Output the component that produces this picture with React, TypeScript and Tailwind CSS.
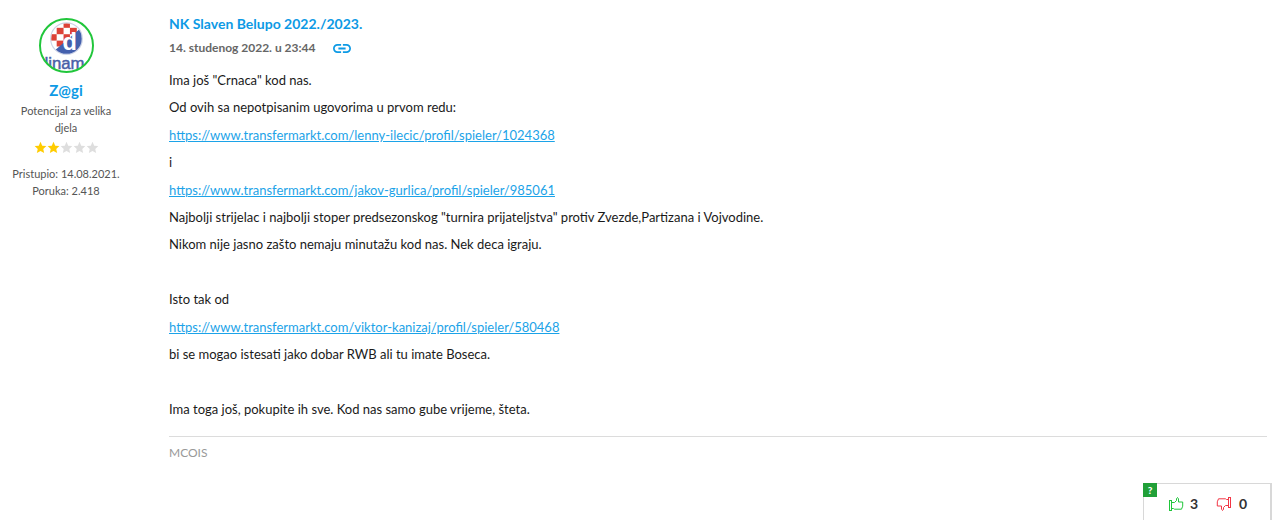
import { useState } from 'react'

const user = {
  name: 'Z@gi',
  rank: 'Potencijal za velika djela',
  joined: '14.08.2021.',
  posts: '2.418',
  stars: 2,
}

const lines = [
  { text: 'Ima još "Crnaca" kod nas.' },
  { text: 'Od ovih sa nepotpisanim ugovorima u prvom redu:' },
  { href: 'https://www.transfermarkt.com/lenny-ilecic/profil/spieler/1024368' },
  { text: 'i' },
  { href: 'https://www.transfermarkt.com/jakov-gurlica/profil/spieler/985061' },
  { text: 'Najbolji strijelac i najbolji stoper predsezonskog "turnira prijateljstva" protiv Zvezde,Partizana i Vojvodine.' },
  { text: 'Nikom nije jasno zašto nemaju minutažu kod nas. Nek deca igraju.' },
  {},
  { text: 'Isto tak od' },
  { href: 'https://www.transfermarkt.com/viktor-kanizaj/profil/spieler/580468' },
  { text: 'bi se mogao istesati jako dobar RWB ali tu imate Boseca.' },
  {},
  { text: 'Ima toga još, pokupite ih sve. Kod nas samo gube vrijeme, šteta.' },
]

function Avatar() {
  return (
    <svg viewBox="0 0 56 56" className="size-[55px]" role="img" aria-label="Dinamo">
      <defs>
        <clipPath id="frame">
          <circle cx="28" cy="28" r="26.5" />
        </clipPath>
        <clipPath id="crest">
          <circle cx="28" cy="21" r="15.5" />
        </clipPath>
      </defs>
      <g clipPath="url(#frame)">
        <rect width="56" height="56" fill="#fff" />
        <circle cx="28" cy="21" r="16.7" fill="#cdd3e6" />
        <g clipPath="url(#crest)">
          <rect x="10" y="2" width="36" height="37" fill="#fff" />
          <g fill="#dc4238">
            <rect x="25" y="4" width="6.500" height="6" />
            <rect x="18" y="10" width="7" height="6.500" />
            <rect x="31.500" y="10" width="7" height="6.500" />
            <rect x="12" y="16.500" width="6" height="6.500" />
            <rect x="25" y="16.500" width="6.500" height="6.500" />
            <rect x="18" y="23" width="7" height="6" />
          </g>
          <path d="M44 9 16 33v7h30V9z" fill="#4460ad" />
        </g>
        <text x="24" y="33" fontSize="24" fontWeight="700" fill="#fff" className="font-['Liberation_Sans',sans-serif]">
          d
        </text>
        <text x="0" y="52" fontSize="17" fill="#4a5fa8" stroke="#4a5fa8" strokeWidth=".5" className="font-['Liberation_Sans',sans-serif]">
          dinam
        </text>
      </g>
      <circle cx="28" cy="28" r="27" fill="none" stroke="#21c63b" strokeWidth="2" />
    </svg>
  )
}

function Star({ filled }: { filled: boolean }) {
  return (
    <svg viewBox="0 0 24 24" className={filled ? 'size-[13px] text-[#ffcc00]' : 'size-[13px] text-[#dedede]'} fill="currentColor">
      <path d="M12 1.5l3.2 7.1 7.6.8-5.7 5.2 1.6 7.6-6.7-3.9-6.7 3.9 1.6-7.6L1.2 9.4l7.6-.8z" />
    </svg>
  )
}

function LinkIcon() {
  return (
    <svg viewBox="2 7 20 10" className="h-[9px] w-[18px]" fill="currentColor">
      <path d="M3.9 12c0-1.71 1.39-3.1 3.1-3.1h4V7H7c-2.76 0-5 2.24-5 5s2.24 5 5 5h4v-1.9H7c-1.71 0-3.1-1.39-3.1-3.1zM8 13h8v-2H8v2zm9-6h-4v1.9h4c1.71 0 3.1 1.39 3.1 3.1s-1.39 3.1-3.1 3.1h-4V17h4c2.76 0 5-2.24 5-5s-2.24-5-5-5z" />
    </svg>
  )
}

function Thumb({ className }: { className: string }) {
  return (
    <svg viewBox="0 0 16 16" className={className} fill="none" stroke="currentColor">
      <path d="M1.500 4.500v10M3.500 4.500v10M1 4.500h3M1 14.500h3" />
      <path d="M4 12.500h1.500l1 .7H13.500l1.200-3V6H10.500V3L9.500 1.500 8.500 2.500V4.500L6.500 6.500H4" strokeLinejoin="round" />
    </svg>
  )
}

export default function App() {
  const [votes] = useState({ up: 3, down: 0 })

  return (
    <div className="bg-white font-[Lato,sans-serif] text-[#1a1a1a]">
      <article className="flex pr-[13px]">
        <aside className="flex w-[132px] shrink-0 flex-col items-center pt-[18px] text-center text-[11px] leading-[17px] text-[#555]">
          <Avatar />
          <a href="#profil" className="mt-2 text-[15px] leading-[18px] font-bold text-[#0d9ae5]">
            {user.name}
          </a>
          <p className="mt-[3px] w-[100px]">{user.rank}</p>
          <div className="mt-[5px] flex" role="img" aria-label={`${user.stars} / 5`}>
            {[1, 2, 3, 4, 5].map((n) => (
              <Star key={n} filled={n <= user.stars} />
            ))}
          </div>
          <p className="mt-[11px]">Pristupio: {user.joined}</p>
          <p>Poruka: {user.posts}</p>
        </aside>

        <div className="ml-[37px] min-w-0 flex-1 pt-[13px]">
          <h2 className="text-sm leading-[22px] font-bold">
            <a href="#tema" className="text-[#0d9ae5]">NK Slaven Belupo 2022./2023.</a>
          </h2>
          <div className="mt-[3px] flex items-center gap-[17px] text-xs leading-5 font-bold text-[#666]">
            <time dateTime="2022-11-14T23:44">14. studenog 2022. u 23:44</time>
            <a href="#poruka" aria-label="Poveznica" className="text-[#0d9ae5]">
              <LinkIcon />
            </a>
          </div>

          <div className="mt-[9px] text-[13px]">
            {lines.map((line, i) =>
              line.text ? (
                <p key={i} className="leading-[27px]">{line.text}</p>
              ) : (
                <p key={i} className="h-7 leading-7">
                  {line.href && (
                    <a href={line.href} className="text-[#1ca3e8] underline">{line.href}</a>
                  )}
                </p>
              )
            )}
          </div>

          <footer className="mt-[13px] border-t border-[#dcdcdc] pt-1 text-xs leading-6 text-[#999]">
            MCOIS
          </footer>
        </div>
      </article>

      {/* Votes */}
      <div className="mt-[18px] mr-2 ml-auto flex h-[37px] w-[129px] border-t border-r-2 border-l border-[#d8d8d8]">
        <button type="button" aria-label="Pomoć" className="-mt-px -ml-px size-[14px] bg-[#21a038] text-[10px] leading-[14px] font-black text-white">
          ?
        </button>
        <div className="flex flex-1 items-center pt-[3px] pl-[11px] text-sm font-bold text-[#333]">
          <button type="button" aria-label="Sviđa mi se" className="text-[#21c63b]">
            <Thumb className="size-4" />
          </button>
          <span className="ml-[6px] w-[26px]">{votes.up}</span>
          <button type="button" aria-label="Ne sviđa mi se" className="text-[#f23645]">
            <Thumb className="size-4 rotate-180" />
          </button>
          <span className="ml-[7px]">{votes.down}</span>
        </div>
      </div>
    </div>
  )
}
